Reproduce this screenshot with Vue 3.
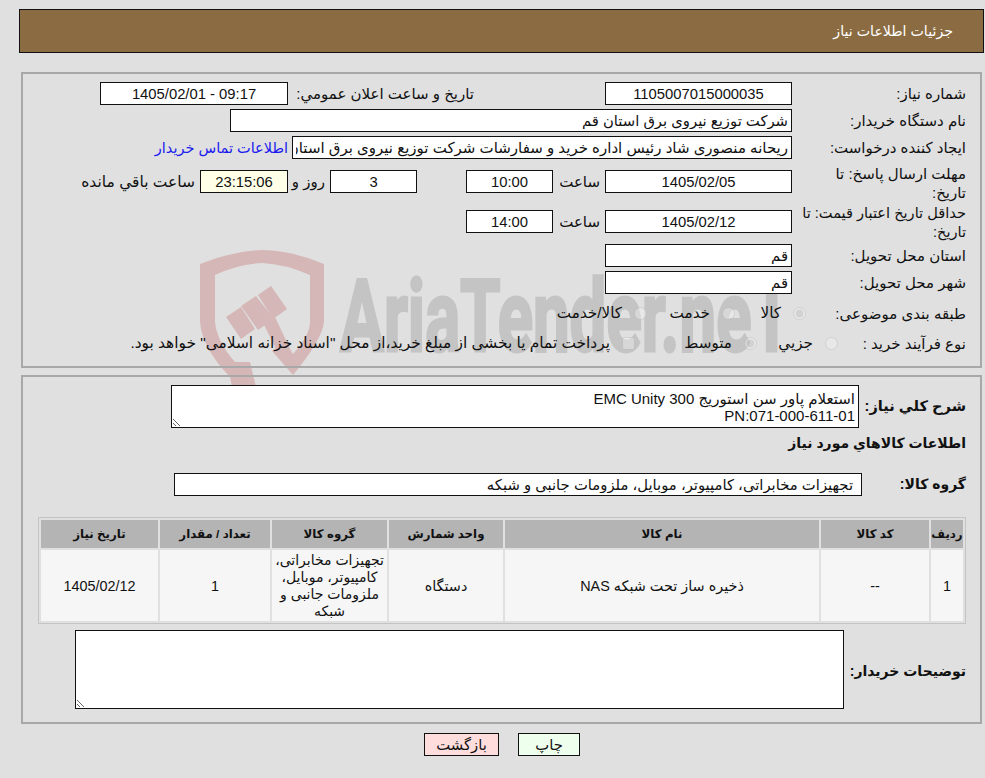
<template>
  <div class="page" dir="rtl">
    <!-- watermark behind the first panel -->
    <svg class="watermark" viewBox="195 245 610 145" width="610" height="145">
      <g fill="#d6b7b7">
        <path fill-rule="evenodd" d="M200 264 Q232 251 262 250 Q294 251 324 264 L324 322 Q322 340 293 375 L272 351 L283 343 L293 354 Q310 335 310 322 L310 275 Q285 264 262 263 Q238 264 215 275 L215 322 Q217 342 235 362 L250 362 L256 387 L232 387 L230 377 Q202 348 200 322 Z" />
        <path d="M226 317 L241 307 L255 329 L241 339 Z" />
        <path d="M241 306 L256 296 L274 319 L258 330 Z" />
        <path d="M258 295 L271 286 L287 309 L273 319 Z" />
        <path d="M263 323 L275 317 L293 355 L283 363 Z" />
      </g>
      <text class="wm-text" x="340" y="351" direction="ltr" textLength="452" lengthAdjust="spacingAndGlyphs">AriaTender.neT</text>
    </svg>

    <div class="header">جزئيات اطلاعات نياز</div>

    <section class="panel first">
      <div class="row">
        <span class="label">شماره نياز:</span>
        <input class="box w187 center" readonly value="1105007015000035" />
        <span class="label-pub">تاريخ و ساعت اعلان عمومي:</span>
        <input class="box w188 center" readonly value="09:17 - 1405/02/01" />
      </div>
      <div class="row">
        <span class="label">نام دستگاه خريدار:</span>
        <input class="box w562" readonly value="شركت توزيع نيروى برق استان قم" />
      </div>
      <div class="row tall">
        <span class="label">ايجاد كننده درخواست:</span>
        <input class="box w500" readonly value="ريحانه منصورى شاد رئيس اداره خريد و سفارشات شركت توزيع نيروى برق استان قم" />
        <a class="contact" href="#">اطلاعات تماس خريدار</a>
      </div>
      <div class="row deadline">
        <span class="label two-line">مهلت ارسال پاسخ: تا<br />تاريخ:</span>
        <input class="box w187 center" readonly value="1405/02/05" />
        <span class="unit">ساعت</span>
        <input class="box w87 center" readonly value="10:00" />
        <input class="box w87 center gap-days" readonly value="3" />
        <span class="unit days">روز و</span>
        <input class="box w88 center remain" readonly value="23:15:06" />
        <span class="unit left">ساعت باقي مانده</span>
      </div>
      <div class="row validity">
        <span class="label two-line narrow">حداقل تاريخ اعتبار قيمت: تا<br />تاريخ:</span>
        <input class="box w187 center" readonly value="1405/02/12" />
        <span class="unit">ساعت</span>
        <input class="box w87 center" readonly value="14:00" />
      </div>
      <div class="row">
        <span class="label">استان محل تحويل:</span>
        <input class="box w187" readonly value="قم" />
      </div>
      <div class="row">
        <span class="label">شهر محل تحويل:</span>
        <input class="box w187" readonly value="قم" />
      </div>
      <div class="row choice cat">
        <span class="label">طبقه بندى موضوعى:</span>
        <label class="opt w71"><input type="radio" disabled checked /><span>كالا</span></label>
        <label class="opt w88o"><input type="radio" disabled /><span>خدمت</span></label>
        <label class="opt"><input type="radio" disabled /><span>كالا/خدمت</span></label>
      </div>
      <div class="row choice proc">
        <span class="label">نوع فرآيند خريد :</span>
        <label class="opt w81"><input type="radio" disabled /><span>جزيي</span></label>
        <label class="opt w122"><input type="radio" disabled checked /><span>متوسط</span></label>
        <label class="opt"><input type="checkbox" disabled /><span class="long">پرداخت تمام يا بخشى از مبلغ خريد،از محل "اسناد خزانه اسلامى" خواهد بود.</span></label>
      </div>
    </section>

    <section class="panel second">
      <div class="row desc">
        <b class="label-b">شرح كلي نياز:</b>
        <textarea class="area short" readonly>استعلام پاور سن استوریج EMC Unity 300
PN:071-000-611-01</textarea>
      </div>
      <h4 class="goods-title">اطلاعات كالاهاي مورد نياز</h4>
      <div class="row group">
        <b class="label-b">گروه كالا:</b>
        <input class="box w688 group-box" readonly value="تجهيزات مخابراتى، كامپيوتر، موبايل، ملزومات جانبى و شبكه" />
      </div>

      <table class="items">
        <thead>
          <tr>
            <th v-for="col in columns" :key="col.title" :style="{ width: col.width + 'px' }">{{ col.title }}</th>
          </tr>
        </thead>
        <tbody>
          <tr>
            <td>1</td>
            <td>--</td>
            <td>ذخيره ساز تحت شبكه NAS</td>
            <td>دستگاه</td>
            <td class="group-cell">تجهيزات مخابراتى، كامپيوتر، موبايل، ملزومات جانبى و شبكه</td>
            <td>1</td>
            <td>1405/02/12</td>
          </tr>
        </tbody>
      </table>

      <div class="row notes">
        <b class="label-b">توضيحات خريدار:</b>
        <textarea class="area big" readonly></textarea>
      </div>
    </section>

    <div class="actions">
      <button class="btn print">چاپ</button>
      <button class="btn back">بازگشت</button>
    </div>
  </div>
</template>

<script setup>
const columns = [
  { title: 'رديف', width: 32 },
  { title: 'كد كالا', width: 108 },
  { title: 'نام كالا', width: 314 },
  { title: 'واحد شمارش', width: 114 },
  { title: 'گروه كالا', width: 115 },
  { title: 'تعداد / مقدار', width: 110 },
  { title: 'تاريخ نياز', width: 117 },
]
</script>

<style>
html, body { margin: 0; background: #e0e0e0; }
</style>

<style scoped>
.page {
  position: relative;
  width: 985px; height: 778px; overflow: hidden;
  padding-top: 9px; box-sizing: border-box;
  background: #e0e0e0; color: #111;
  font-family: "Liberation Sans", "DejaVu Sans", sans-serif;
  font-size: 15px;
}
.watermark { position: absolute; left: 195px; top: 245px; }
.wm-text {
  font-family: Roboto, sans-serif; font-weight: 700; font-size: 100px;
  fill: #c4c4c4; stroke: #c4c4c4; stroke-width: 3px;
}

.header {
  position: relative;
  margin: 0 1px 0 19px; height: 44px; box-sizing: border-box;
  border: 1px solid #111; background: #8b6c42; color: #fff;
  padding-right: 30px; line-height: 43px; font-size: 14.2px;
}

.panel {
  position: relative;
  margin: 0 3px 0 21px; box-sizing: border-box;
  border: 2px solid #a8a8a8;
}
.first { margin-top: 19px; height: 296px; padding: 8px 14px 0 0; }
.second { margin-top: 7px; height: 349px; padding: 8px 14px 0 0; }

.row { display: flex; align-items: flex-start; height: 27px; }
.tall { height: 34px; }
.deadline { height: 40px; }
.validity { height: 34px; }

.label { width: 174px; flex: none; line-height: 19px; padding-top: 2px; box-sizing: border-box; padding-left: 6px; }
.two-line { padding-top: 0; margin-top: -6px; }
.narrow { padding-left: 0; font-size: 14.6px; white-space: nowrap; }
.box {
  height: 23px; box-sizing: border-box; flex: none;
  border: 1px solid #111; background: #fff; color: #111;
  font: inherit; font-size: 14.8px; padding: 0 3px; outline: none; direction: rtl;
}
.center { text-align: center; }
.w187 { width: 187px; }
.w188 { width: 188px; }
.w88 { width: 88px; }
.w87 { width: 87px; }
.w562 { width: 562px; }
.w500 { width: 500px; font-size: 15px; }
.w688 { width: 688px; }
.label-pub { width: 312px; padding: 2px 131px 0 0; box-sizing: border-box; flex: none; line-height: 19px; margin-left: 5px; }
.contact { color: #1a1aee; text-decoration: none; margin-right: 4px; line-height: 19px; padding-top: 3px; font-size: 14.5px; }
.unit { width: 52px; flex: none; box-sizing: border-box; padding: 2px 5px 0 0; line-height: 19px; }
.gap-days { margin-right: 49px; }
.days { width: 42px; }
.remain { background: #ffffe8; }
.left { width: auto; font-size: 15.5px; }

.choice { align-items: center; height: 30px; }
.cat .label { width: 160px; padding-top: 0; }
.proc .label { width: 128px; padding-top: 0; }
.opt { display: flex; align-items: center; flex: none; }
.opt input { width: 13px; height: 13px; margin: 0 0 0 6px; opacity: .6; }
.opt span { margin-right: 6px; font-size: 15.2px; }
.opt .long { font-size: 15.4px; }
.w71 { width: 71px; }
.w88o { width: 88px; }
.w81 { width: 81px; }
.w122 { width: 122px; }

.label-b { font-weight: 700; flex: none; font-size: 14px; }
.desc { height: 49px; }
.desc .label-b { width: 107px; margin-top: 12px; box-sizing: border-box; font-size: 14.6px; }
.area {
  display: block; box-sizing: border-box; flex: none;
  border: 1px solid #111; background: #fff; color: #111;
  font: inherit; line-height: 17px; padding: 4px 3px; outline: none; direction: rtl;
}
.short { width: 688px; height: 43px; }
.big { width: 769px; height: 79px; }
.goods-title { margin: 0; height: 39px; font-size: 14px; line-height: 18px; }
.group { height: 44px; }
.group .label-b { width: 104px; margin-top: 3px; }
.group-box { padding-right: 8px; }

.items {
  width: 928px; table-layout: fixed;
  border: 1px solid #c4c4c4; border-collapse: separate; border-spacing: 2px;
  font-size: 14.4px; text-align: center;
}
.items th { height: 28px; padding: 0; background: #b4b4b4; font-size: 11.8px; }
.items td { padding: 1px 4px 0; line-height: 17px; height: 70px; background: #f6f6f6; }
.items .group-cell { padding: 1px 1px 0; font-size: 14px; }

.notes { height: auto; margin-top: 6px; }
.notes .label-b { width: 122px; margin-top: 33px; }

.actions {
  position: relative;
  display: flex; justify-content: center; gap: 19px;
  margin: 9px 0 0; padding-left: 19px;
}
.btn {
  height: 23px; box-sizing: border-box; padding: 0;
  border: 1px solid #111; color: #111; font: inherit; font-size: 14.8px;
}
.print { width: 62px; background: #eeffee; }
.back { width: 75px; background: #ffdddd; }
</style>
